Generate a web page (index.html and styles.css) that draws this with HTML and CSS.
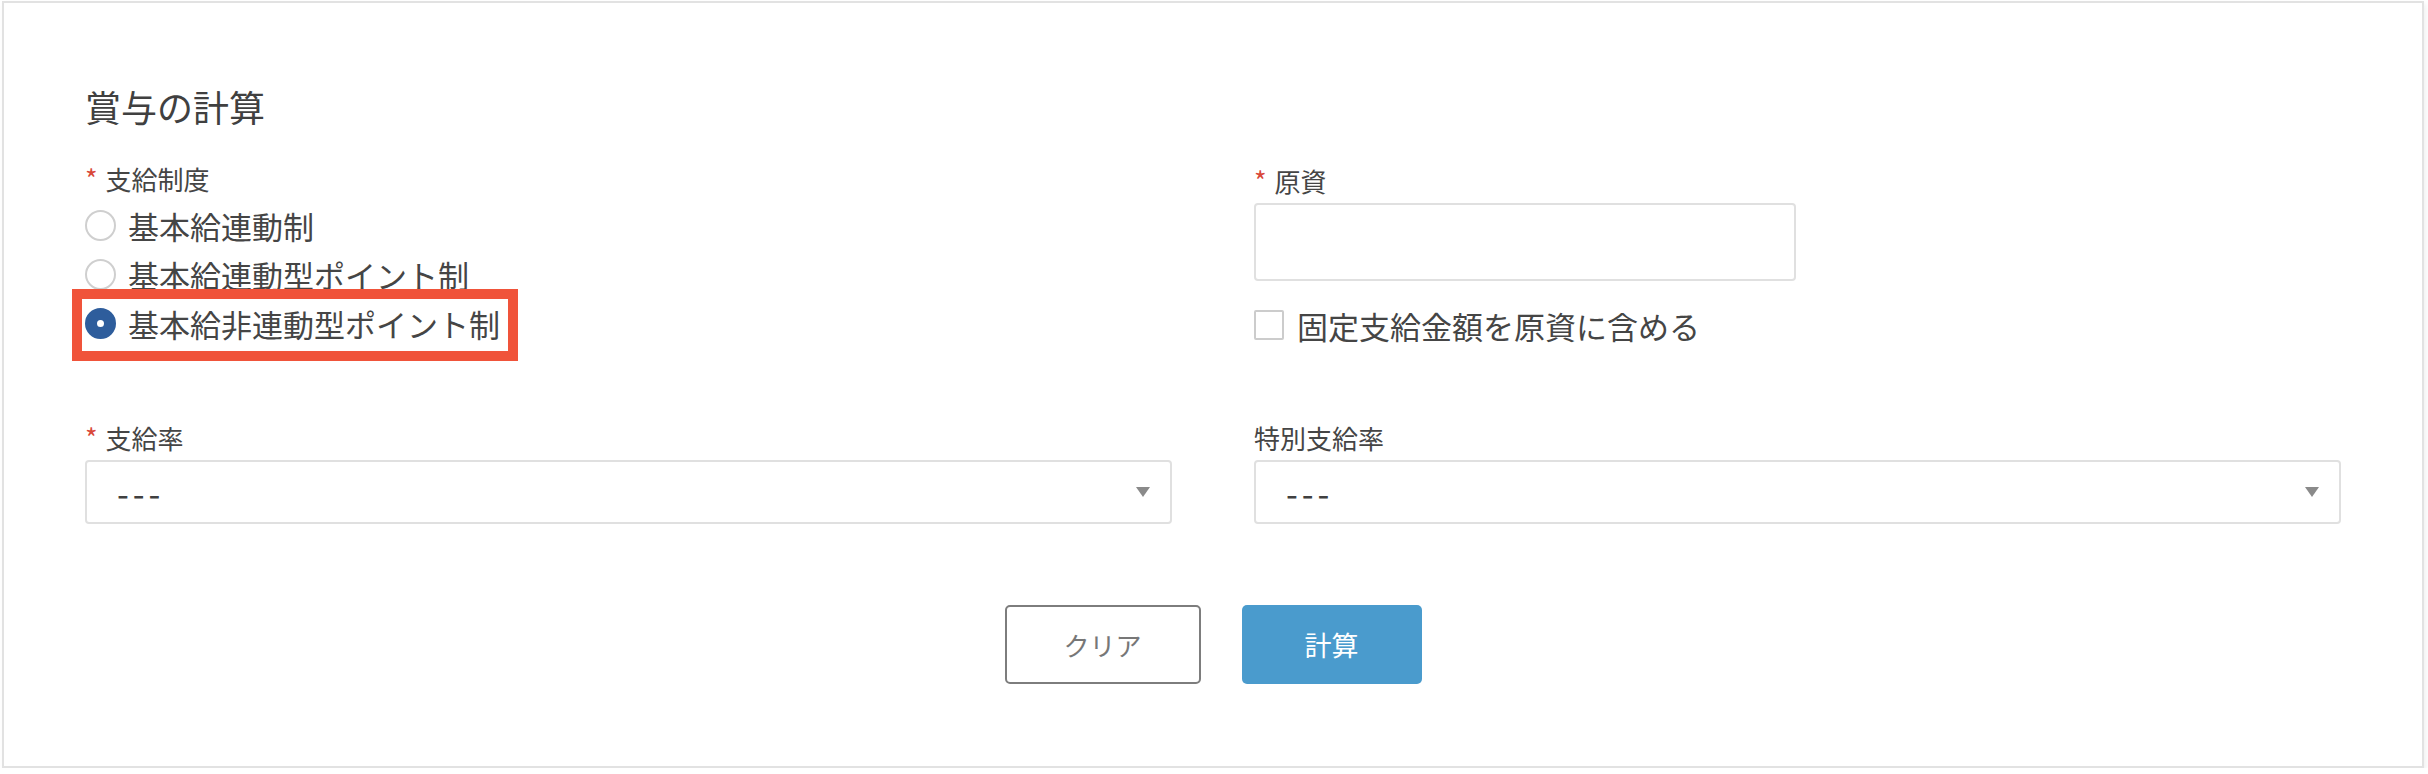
FILE: index.html
```html
<!DOCTYPE html>
<html lang="ja">
<head>
    <meta charset="UTF-8">
    <meta name="viewport" content="width=device-width, initial-scale=1.0">
    <title>賞与の計算</title>
    <link rel="stylesheet" href="styles.css">
</head>
<body>
    <div class="panel">
        <h2 class="title">賞与の計算</h2>

        <div class="grid">
            <!-- 支給制度 -->
            <div class="field">
                <div class="label"><span class="req">*</span>支給制度</div>
                <div class="radio-row">
                    <span class="radio"></span>基本給連動制
                </div>
                <div class="radio-row">
                    <span class="radio"></span>基本給連動型ポイント制
                </div>
                <div class="radio-row marked">
                    <span class="radio checked"></span>基本給非連動型ポイント制
                </div>
            </div>

            <!-- 原資 -->
            <div class="field field-right">
                <div class="label"><span class="req">*</span>原資</div>
                <div class="text-input"></div>
                <div class="check-row">
                    <span class="checkbox"></span>固定支給金額を原資に含める
                </div>
            </div>

            <div class="field row2">
                <div class="label"><span class="req">*</span>支給率</div>
                <div class="select">
                    <span class="select-value">---</span>
                    <svg class="caret" width="14" height="10" viewBox="0 0 14 10"><path d="M0 0H14L7 10Z" fill="#8a8a8a"/></svg>
                </div>
            </div>

            <div class="field row2">
                <div class="label">特別支給率</div>
                <div class="select">
                    <span class="select-value">---</span>
                    <svg class="caret" width="14" height="10" viewBox="0 0 14 10"><path d="M0 0H14L7 10Z" fill="#8a8a8a"/></svg>
                </div>
            </div>
        </div>

        <div class="actions">
            <button class="btn btn-clear">クリア</button>
            <button class="btn btn-calc">計算</button>
        </div>
    </div>
</body>
</html>
```

FILE: styles.css
```css
body {
    margin: 0;
    background: #fff;
    font-family: "Noto Sans CJK JP", "Noto Sans", sans-serif;
    color: #454545;
}
.panel {
    box-sizing: border-box;
    width: 2422px;
    height: 767px;
    margin: 1px 0 0 2px;
    padding: 78px 81px 0 81px;
    border: 2px solid #e2e2e2;
    background: #fff;
    box-shadow: 2px 3px 5px rgba(0, 0, 0, 0.06);
}
.title {
    margin: 0 0 25px;
    font-size: 36px;
    line-height: 50px;
    font-weight: normal;
    color: #404040;
}
.grid {
    display: grid;
    grid-template-columns: 1fr 1fr;
    column-gap: 82px;
}
.field-right {
    padding-top: 2px;
}
.row2 {
    margin-top: 66px;
}
.label {
    font-size: 26px;
    line-height: 45px;
}
.req {
    color: #d9483a;
    font-size: 27px;
    margin-right: 8px;
}
.radio-row {
    display: flex;
    align-items: center;
    gap: 12px;
    height: 49px;
    font-size: 31px;
    width: max-content;
}
.radio {
    box-sizing: border-box;
    width: 31px;
    height: 31px;
    border: 2px solid #cfcfcf;
    border-radius: 50%;
    background: #fff;
}
.radio.checked {
    border: 12px solid #2e5d9c;
    background: #fff;
}
.marked {
    position: relative;
}
.marked::after {
    content: "";
    position: absolute;
    left: -13px;
    top: -10px;
    right: -18px;
    bottom: -13px;
    border: 10px solid #f0533a;
}
.text-input {
    box-sizing: border-box;
    width: 542px;
    height: 78px;
    border: 2px solid #e0e0e0;
    border-radius: 4px;
}
.check-row {
    display: flex;
    align-items: center;
    gap: 13px;
    height: 48px;
    margin-top: 20px;
    font-size: 31px;
}
.checkbox {
    box-sizing: border-box;
    width: 30px;
    height: 30px;
    border: 2px solid #cccccc;
    border-radius: 2px;
}
.select {
    box-sizing: border-box;
    height: 64px;
    display: flex;
    align-items: center;
    justify-content: space-between;
    padding: 0 20px 0 30px;
    border: 2px solid #e0e0e0;
    border-radius: 4px;
}
.select-value {
    font-size: 34px;
    letter-spacing: 4px;
    color: #404040;
}
.actions {
    display: flex;
    justify-content: center;
    gap: 41px;
    margin-top: 81px;
}
.btn {
    box-sizing: border-box;
    height: 79px;
    border-radius: 5px;
    font-family: "Noto Sans CJK JP", "Noto Sans", sans-serif;
    font-size: 26px;
}
.btn-clear {
    width: 196px;
    border: 2px solid #7d7d7d;
    background: #fff;
    color: #777;
}
.btn-calc {
    width: 180px;
    border: none;
    background: #4a9bcd;
    color: #fff;
    font-size: 27px;
}
```
